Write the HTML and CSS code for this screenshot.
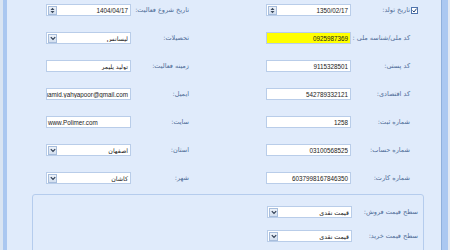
FILE: index.html
```html
<!DOCTYPE html>
<html lang="fa">
<head>
<meta charset="utf-8">
<title>Form</title>
<link rel="stylesheet" href="styles.css">
</head>
<body>
<div class="frame">
  <div class="edge-left"></div>
  <div class="panel" dir="rtl">
    <div class="form">
      <div class="row">
        <div class="pair">
          <div class="label label-a"><span class="check"><svg width="5" height="5" viewBox="0 0 5 5"><path d="M0.5 2.5 L2 4 L4.6 0.6" fill="none" stroke="#1f3f73" stroke-width="1"/></svg></span><span>تاریخ تولد:</span></div>
          <div class="field"><span class="btn"><svg width="5" height="7" viewBox="0 0 5 7"><path d="M0.5 3 L2.5 0.8 L4.5 3 Z M0.5 4 L2.5 6.2 L4.5 4 Z" fill="#3b4a5e"/></svg></span><span class="value">1350/02/17</span></div>
        </div>
        <div class="pair">
          <div class="label label-b">تاریخ شروع فعالیت:</div>
          <div class="field"><span class="btn"><svg width="5" height="7" viewBox="0 0 5 7"><path d="M0.5 3 L2.5 0.8 L4.5 3 Z M0.5 4 L2.5 6.2 L4.5 4 Z" fill="#3b4a5e"/></svg></span><span class="value">1404/04/17</span></div>
        </div>
      </div>
      <div class="row">
        <div class="pair">
          <div class="label label-a">کد ملی/شناسه ملی :</div>
          <div class="field field-yellow"><span class="value">0925987369</span></div>
        </div>
        <div class="pair">
          <div class="label label-b">تحصیلات:</div>
          <div class="field"><span class="btn"><svg width="6" height="5" viewBox="0 0 6 5"><path d="M0.8 1.2 L3 3.5 L5.2 1.2" fill="none" stroke="#2f3d52" stroke-width="1.2"/></svg></span><span class="value">لیسانس</span></div>
        </div>
      </div>
      <div class="row">
        <div class="pair">
          <div class="label label-a">کد پستی:</div>
          <div class="field"><span class="value">9115328501</span></div>
        </div>
        <div class="pair">
          <div class="label label-b">زمینه فعالیت:</div>
          <div class="field"><span class="value">تولید پلیمر</span></div>
        </div>
      </div>
      <div class="row">
        <div class="pair">
          <div class="label label-a">کد اقتصادی:</div>
          <div class="field"><span class="value">542789332121</span></div>
        </div>
        <div class="pair">
          <div class="label label-b">ایمیل:</div>
          <div class="field"><span class="value">hamid.yahyapoor@gmail.com</span></div>
        </div>
      </div>
      <div class="row">
        <div class="pair">
          <div class="label label-a">شماره ثبت:</div>
          <div class="field"><span class="value">1258</span></div>
        </div>
        <div class="pair">
          <div class="label label-b">سایت:</div>
          <div class="field"><span class="value value-start">www.Polimer.com</span></div>
        </div>
      </div>
      <div class="row">
        <div class="pair">
          <div class="label label-a">شماره حساب:</div>
          <div class="field"><span class="value">03100568525</span></div>
        </div>
        <div class="pair">
          <div class="label label-b">استان:</div>
          <div class="field"><span class="btn"><svg width="6" height="5" viewBox="0 0 6 5"><path d="M0.8 1.2 L3 3.5 L5.2 1.2" fill="none" stroke="#2f3d52" stroke-width="1.2"/></svg></span><span class="value">اصفهان</span></div>
        </div>
      </div>
      <div class="row">
        <div class="pair">
          <div class="label label-a">شماره کارت:</div>
          <div class="field"><span class="value">6037998167846350</span></div>
        </div>
        <div class="pair">
          <div class="label label-b">شهر:</div>
          <div class="field"><span class="btn"><svg width="6" height="5" viewBox="0 0 6 5"><path d="M0.8 1.2 L3 3.5 L5.2 1.2" fill="none" stroke="#2f3d52" stroke-width="1.2"/></svg></span><span class="value">کاشان</span></div>
        </div>
      </div>
    </div>
    <div class="group">
      <div class="row">
        <div class="pair">
          <div class="label label-g">سطح قیمت فروش:</div>
          <div class="field"><span class="btn"><svg width="6" height="5" viewBox="0 0 6 5"><path d="M0.8 1.2 L3 3.5 L5.2 1.2" fill="none" stroke="#2f3d52" stroke-width="1.2"/></svg></span><span class="value">قیمت نقدي</span></div>
        </div>
      </div>
      <div class="row">
        <div class="pair">
          <div class="label label-g">سطح قیمت خرید:</div>
          <div class="field"><span class="btn"><svg width="6" height="5" viewBox="0 0 6 5"><path d="M0.8 1.2 L3 3.5 L5.2 1.2" fill="none" stroke="#2f3d52" stroke-width="1.2"/></svg></span><span class="value">قیمت نقدي</span></div>
        </div>
      </div>
    </div>
  </div>
  <div class="edge-right"></div>
</div>
</body>
</html>
```

FILE: styles.css
```css
html, body {
  margin: 0;
  padding: 0;
}
body {
  width: 450px;
  height: 250px;
  overflow: hidden;
  background: #e0ebfb;
  font-family: "Liberation Sans", "DejaVu Sans", sans-serif;
}
.frame {
  display: flex;
  height: 250px;
}
.edge-left {
  width: 4px;
  border-left: 3px solid #d9e4f2;
  background: #aac7f0;
}
.edge-right {
  width: 6px;
  border-left: 1px solid #8fb0dc;
  border-right: 2px solid #e3e9f2;
  background: #abc8f1;
}
.panel {
  flex: 1;
  display: flex;
  flex-direction: column;
  background: #e0ebfb;
}
.form {
  display: flex;
  flex-direction: column;
  gap: 16px;
  padding: 4px 31px 0 0;
}
.row {
  display: flex;
  gap: 77px;
  height: 12px;
}
.pair {
  display: flex;
  align-items: center;
}
.label {
  display: flex;
  align-items: center;
  justify-content: flex-start;
  gap: 1px;
  font-family: "DejaVu Sans", sans-serif;
  font-size: 6.5px;
  color: #4f6c97;
  white-space: nowrap;
}
.label-a { width: 59px; }
.label-b { width: 58px; }
.label-g { width: 66px; }
.check {
  width: 7px;
  height: 7px;
  box-sizing: border-box;
  margin-right: -8px;
  border: 1px solid #4f74ad;
  background: #fff;
  display: flex;
  align-items: center;
  justify-content: center;
}
.field {
  direction: ltr;
  width: 85px;
  height: 12px;
  box-sizing: border-box;
  border: 1px solid #b9cde9;
  background: #fff;
  display: flex;
  align-items: center;
}
.field-yellow {
  background: #ffff00;
}
.btn {
  width: 9px;
  height: 9px;
  margin-left: 1px;
  box-sizing: border-box;
  border: 1px solid #a7bddc;
  background: linear-gradient(#edf2f9, #d3dfef);
  display: flex;
  align-items: center;
  justify-content: center;
  flex: none;
}
.value {
  flex: 1;
  display: flex;
  justify-content: flex-end;
  overflow: hidden;
  white-space: nowrap;
  padding: 0 2px 0 1px;
  font-size: 6.3px;
  color: #1a1a1a;
}
.value-start {
  justify-content: flex-start;
}
.group {
  margin: 10px 17px 0 25px;
  height: 70px;
  flex: none;
  border: 1px solid #b5cced;
  border-radius: 3px;
  padding: 11px 5px 0 0;
  display: flex;
  flex-direction: column;
  gap: 12px;
}
.group .row {
  gap: 0;
}
```
